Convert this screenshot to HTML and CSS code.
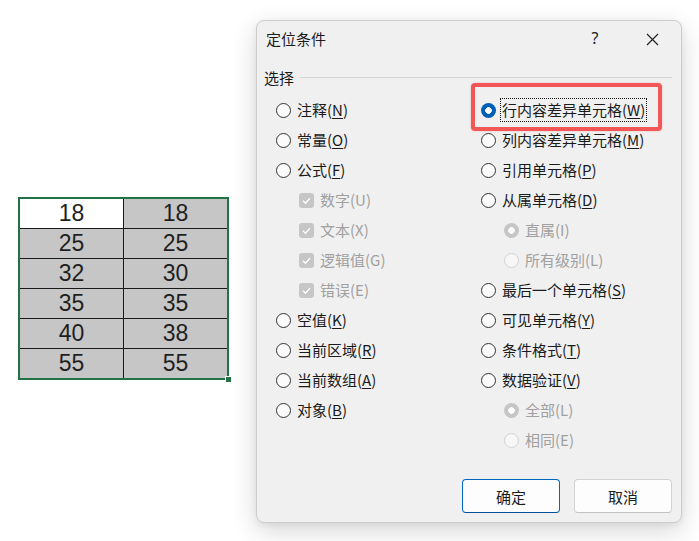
FILE: index.html
```html
<!DOCTYPE html>
<html lang="zh-CN">
<head>
<meta charset="utf-8">
<title>定位条件</title>
<link rel="stylesheet" href="styles.css">
</head>
<body>
<div class="desk">
  <!-- spreadsheet selection -->
  <div class="sheet">
    <div class="cell active">18</div><div class="cell">18</div>
    <div class="cell">25</div><div class="cell">25</div>
    <div class="cell">32</div><div class="cell">30</div>
    <div class="cell">35</div><div class="cell">35</div>
    <div class="cell">40</div><div class="cell">38</div>
    <div class="cell">55</div><div class="cell">55</div>
    <span class="fill-handle"></span>
  </div>

  <!-- Go To Special dialog -->
  <div class="dialog">
    <div class="titlebar">
      <span class="title">定位条件</span>
      <span class="help">?</span>
      <span class="close">
        <svg width="13" height="13" viewBox="0 0 13 13"><path d="M1 1 L12 12 M12 1 L1 12" stroke="#222" stroke-width="1.2" fill="none"/></svg>
      </span>
    </div>

    <div class="group-head"><span class="legend">选择</span><span class="rule"></span></div>

    <div class="options">
      <div class="col">
        <div class="opt"><span class="radio"></span><span class="text">注释(<u>N</u>)</span></div>
        <div class="opt"><span class="radio"></span><span class="text">常量(<u>O</u>)</span></div>
        <div class="opt"><span class="radio"></span><span class="text">公式(<u>F</u>)</span></div>
        <div class="opt sub disabled"><span class="check"><svg width="15" height="15" viewBox="0 0 15 15"><path d="M4 7.8 L6.4 10.2 L11 5.2" stroke="#fff" stroke-width="1.3" fill="none"/></svg></span><span class="text">数字(U)</span></div>
        <div class="opt sub disabled"><span class="check"><svg width="15" height="15" viewBox="0 0 15 15"><path d="M4 7.8 L6.4 10.2 L11 5.2" stroke="#fff" stroke-width="1.3" fill="none"/></svg></span><span class="text">文本(X)</span></div>
        <div class="opt sub disabled"><span class="check"><svg width="15" height="15" viewBox="0 0 15 15"><path d="M4 7.8 L6.4 10.2 L11 5.2" stroke="#fff" stroke-width="1.3" fill="none"/></svg></span><span class="text">逻辑值(G)</span></div>
        <div class="opt sub disabled"><span class="check"><svg width="15" height="15" viewBox="0 0 15 15"><path d="M4 7.8 L6.4 10.2 L11 5.2" stroke="#fff" stroke-width="1.3" fill="none"/></svg></span><span class="text">错误(E)</span></div>
        <div class="opt"><span class="radio"></span><span class="text">空值(<u>K</u>)</span></div>
        <div class="opt"><span class="radio"></span><span class="text">当前区域(<u>R</u>)</span></div>
        <div class="opt"><span class="radio"></span><span class="text">当前数组(<u>A</u>)</span></div>
        <div class="opt"><span class="radio"></span><span class="text">对象(<u>B</u>)</span></div>
      </div>
      <div class="col">
        <div class="opt"><span class="radio checked"></span><span class="text focus">行内容差异单元格(<u>W</u>)</span></div>
        <div class="opt"><span class="radio"></span><span class="text">列内容差异单元格(<u>M</u>)</span></div>
        <div class="opt"><span class="radio"></span><span class="text">引用单元格(<u>P</u>)</span></div>
        <div class="opt"><span class="radio"></span><span class="text">从属单元格(<u>D</u>)</span></div>
        <div class="opt sub disabled"><span class="radio checked"></span><span class="text">直属(I)</span></div>
        <div class="opt sub disabled"><span class="radio"></span><span class="text">所有级别(L)</span></div>
        <div class="opt"><span class="radio"></span><span class="text">最后一个单元格(<u>S</u>)</span></div>
        <div class="opt"><span class="radio"></span><span class="text">可见单元格(<u>Y</u>)</span></div>
        <div class="opt"><span class="radio"></span><span class="text">条件格式(<u>T</u>)</span></div>
        <div class="opt"><span class="radio"></span><span class="text">数据验证(<u>V</u>)</span></div>
        <div class="opt sub disabled"><span class="radio checked"></span><span class="text">全部(L)</span></div>
        <div class="opt sub disabled"><span class="radio"></span><span class="text">相同(E)</span></div>
      </div>
    </div>

    <div class="buttons">
      <button class="btn primary">确定</button>
      <button class="btn">取消</button>
    </div>

    <div class="callout"></div>
  </div>
</div>
</body>
</html>
```

FILE: styles.css
```css
html, body {
  margin: 0;
  background: #ffffff;
}

body {
  font-family: "Noto Sans CJK SC", "Noto Sans", sans-serif;
  color: #1b1b1b;
}

.desk {
  position: relative;
  width: 699px;
  height: 541px;
  overflow: hidden;
}

/* ---------- spreadsheet block ---------- */
.sheet {
  position: absolute;
  left: 18px;
  top: 197px;
  width: 211px;
  height: 183px;
  box-sizing: border-box;
  border: 2px solid #217346;
  background: #c6c6c6;
  display: grid;
  grid-template-columns: 103px 104px;
  grid-template-rows: 29px repeat(5, 30px);
}

.cell {
  box-sizing: border-box;
  border-top: 1px solid #1a1a1a;
  display: flex;
  align-items: center;
  justify-content: center;
  font-family: "Liberation Sans", Arial, sans-serif;
  font-size: 23px;
  color: #1f1f1f;
}

.cell:nth-child(-n+2) { border-top: 0; }
.cell:nth-child(even) { border-left: 1px solid #1a1a1a; }
.cell.active { background: #ffffff; }

.fill-handle {
  position: absolute;
  right: -5px;
  bottom: -5px;
  width: 5px;
  height: 5px;
  background: #217346;
  border: 1px solid #ffffff;
}

/* ---------- dialog ---------- */
.dialog {
  position: absolute;
  left: 256px;
  top: 20px;
  width: 426px;
  height: 503px;
  box-sizing: border-box;
  background: #f0f0f0;
  border: 1px solid #cdcdcd;
  border-radius: 8px;
  box-shadow: 0 8px 26px rgba(0, 0, 0, 0.16), 0 2px 6px rgba(0, 0, 0, 0.06);
  display: flex;
  flex-direction: column;
}

.titlebar {
  height: 34px;
  display: flex;
  align-items: center;
  padding: 0 17px 0 9px;
  font-size: 15px;
}

.title { flex: 1; }

.help {
  width: 20px;
  text-align: center;
  font-family: "Noto Sans", sans-serif;
  font-size: 16px;
  margin-right: 35px;
}

.close {
  width: 24px;
  height: 24px;
  display: flex;
  align-items: center;
  justify-content: center;
  margin-top: 2px;
}

.group-head {
  height: 20px;
  margin-top: 12px;
  display: flex;
  align-items: center;
  gap: 6px;
  padding: 0 9px 0 7px;
  font-size: 15px;
}

.rule {
  flex: 1;
  height: 1px;
  background: #d6d6d6;
  margin-top: 1px;
}

.options {
  margin-top: 8px;
  padding-left: 19px;
  display: flex;
}

.col {
  display: flex;
  flex-direction: column;
}

.col:first-child { width: 205px; }

.opt {
  height: 30px;
  display: flex;
  align-items: center;
  gap: 6px;
  font-size: 15px;
  line-height: 20px;
}

.opt.sub { padding-left: 23px; }

.opt.disabled .text { color: #a0a0a0; }

.text u {
  text-decoration-thickness: 1px;
  text-underline-offset: 2px;
}

.text.focus {
  outline: 1px dotted #111;
  outline-offset: 1px;
}

/* radio buttons */
.radio {
  width: 15px;
  height: 15px;
  box-sizing: border-box;
  border-radius: 50%;
  border: 1px solid #333333;
  background: #fbfbfb;
  flex: none;
}

.radio.checked {
  border: 0;
  background: radial-gradient(circle, #ffffff 0 3px, #005fb8 3.6px);
}

.disabled .radio {
  border-color: #d2d2d2;
  background: #f7f7f7;
}

.disabled .radio.checked {
  border: 0;
  background: radial-gradient(circle, #ffffff 0 3px, #c6c6c6 3.6px);
}

/* check boxes */
.check {
  width: 15px;
  height: 15px;
  border-radius: 3px;
  background: #c6c6c6;
  flex: none;
  display: flex;
}

/* buttons */
.buttons {
  margin-top: auto;
  padding: 0 9px 9px 0;
  display: flex;
  justify-content: flex-end;
  gap: 14px;
}

.btn {
  width: 98px;
  height: 34px;
  box-sizing: border-box;
  border: 1px solid #d2d2d2;
  border-bottom-color: #c2c2c2;
  border-radius: 4px;
  background: #fdfdfd;
  font-family: "Noto Sans CJK SC", sans-serif;
  font-size: 15px;
  color: #1b1b1b;
  padding: 0;
}

.btn.primary {
  border-color: #0067c0;
  border-bottom-color: #00509a;
}

/* red highlight frame */
.callout {
  position: absolute;
  left: 214px;
  top: 62px;
  width: 191px;
  height: 48px;
  box-sizing: border-box;
  border: 4px solid #f25656;
  border-radius: 4px;
  box-shadow: 0 0 2px rgba(242, 86, 86, 0.4);
}
```
